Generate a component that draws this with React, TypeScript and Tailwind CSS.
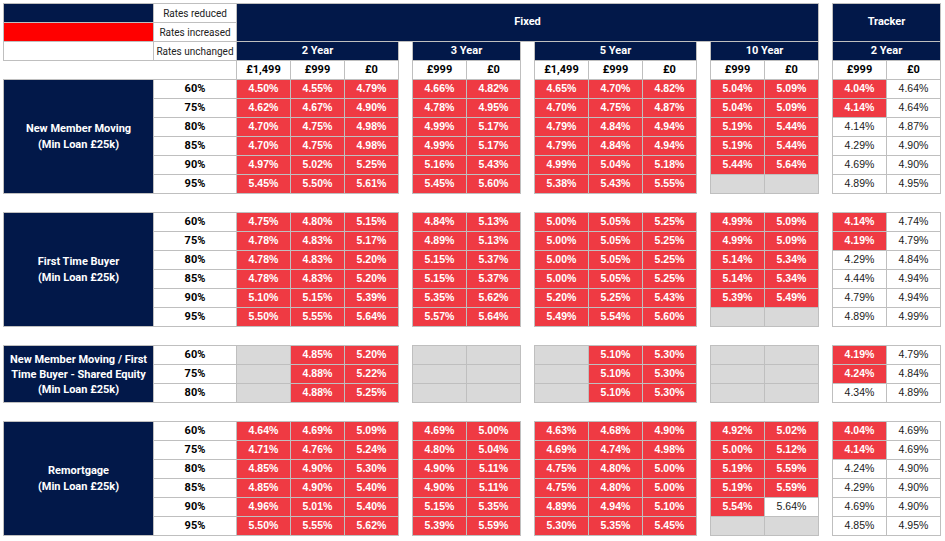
import React from "react";

const B = "-ml-px -mt-px border border-[#bfbfbf] flex items-center justify-center";
const NAVY = "bg-[#021849]";
const HEAD = "font-['Roboto',Arial,sans-serif] font-bold text-[11px]";

type Row = [string, string[], string[], string[], string[], string[]];

const sections: { label: React.ReactNode; span: string; rows: Row[] }[] = [
  {
    label: (
      <>
        New Member Moving
        <br />
        (Min Loan £25k)
      </>
    ),
    span: "row-span-6 leading-4",
    rows: [
      ["60%", ["4.50", "4.55", "4.79"], ["4.66", "4.82"], ["4.65", "4.70", "4.82"], ["5.04", "5.09"], ["4.04", "w4.64"]],
      ["75%", ["4.62", "4.67", "4.90"], ["4.78", "4.95"], ["4.70", "4.75", "4.87"], ["5.04", "5.09"], ["4.14", "w4.64"]],
      ["80%", ["4.70", "4.75", "4.98"], ["4.99", "5.17"], ["4.79", "4.84", "4.94"], ["5.19", "5.44"], ["w4.14", "w4.87"]],
      ["85%", ["4.70", "4.75", "4.98"], ["4.99", "5.17"], ["4.79", "4.84", "4.94"], ["5.19", "5.44"], ["w4.29", "w4.90"]],
      ["90%", ["4.97", "5.02", "5.25"], ["5.16", "5.43"], ["4.99", "5.04", "5.18"], ["5.44", "5.64"], ["w4.69", "w4.90"]],
      ["95%", ["5.45", "5.50", "5.61"], ["5.45", "5.60"], ["5.38", "5.43", "5.55"], ["-", "-"], ["w4.89", "w4.95"]],
    ],
  },
  {
    label: (
      <>
        First Time Buyer
        <br />
        (Min Loan £25k)
      </>
    ),
    span: "row-span-6 leading-4",
    rows: [
      ["60%", ["4.75", "4.80", "5.15"], ["4.84", "5.13"], ["5.00", "5.05", "5.25"], ["4.99", "5.09"], ["4.14", "w4.74"]],
      ["75%", ["4.78", "4.83", "5.17"], ["4.89", "5.13"], ["5.00", "5.05", "5.25"], ["4.99", "5.09"], ["4.19", "w4.79"]],
      ["80%", ["4.78", "4.83", "5.20"], ["5.15", "5.37"], ["5.00", "5.05", "5.25"], ["5.14", "5.34"], ["w4.29", "w4.84"]],
      ["85%", ["4.78", "4.83", "5.20"], ["5.15", "5.37"], ["5.00", "5.05", "5.25"], ["5.14", "5.34"], ["w4.44", "w4.94"]],
      ["90%", ["5.10", "5.15", "5.39"], ["5.35", "5.62"], ["5.20", "5.25", "5.43"], ["5.39", "5.49"], ["w4.79", "w4.94"]],
      ["95%", ["5.50", "5.55", "5.64"], ["5.57", "5.64"], ["5.49", "5.54", "5.60"], ["-", "-"], ["w4.89", "w4.99"]],
    ],
  },
  {
    label: (
      <>
        New Member Moving / First
        <br />
        Time Buyer - Shared Equity
        <br />
        (Min Loan £25k)
      </>
    ),
    span: "row-span-3 leading-[15px]",
    rows: [
      ["60%", ["-", "4.85", "5.20"], ["-", "-"], ["-", "5.10", "5.30"], ["-", "-"], ["4.19", "w4.79"]],
      ["75%", ["-", "4.88", "5.22"], ["-", "-"], ["-", "5.10", "5.30"], ["-", "-"], ["4.24", "w4.84"]],
      ["80%", ["-", "4.88", "5.25"], ["-", "-"], ["-", "5.10", "5.30"], ["-", "-"], ["w4.34", "w4.89"]],
    ],
  },
  {
    label: (
      <>
        Remortgage
        <br />
        (Min Loan £25k)
      </>
    ),
    span: "row-span-6 leading-4",
    rows: [
      ["60%", ["4.64", "4.69", "5.09"], ["4.69", "5.00"], ["4.63", "4.68", "4.90"], ["4.92", "5.02"], ["4.04", "w4.69"]],
      ["75%", ["4.71", "4.76", "5.24"], ["4.80", "5.04"], ["4.69", "4.74", "4.98"], ["5.00", "5.12"], ["4.14", "w4.69"]],
      ["80%", ["4.85", "4.90", "5.30"], ["4.90", "5.11"], ["4.75", "4.80", "5.00"], ["5.19", "5.59"], ["w4.24", "w4.90"]],
      ["85%", ["4.85", "4.90", "5.40"], ["4.90", "5.11"], ["4.75", "4.80", "5.00"], ["5.19", "5.59"], ["w4.29", "w4.90"]],
      ["90%", ["4.96", "5.01", "5.40"], ["5.15", "5.35"], ["4.89", "4.94", "5.10"], ["5.54", "w5.64"], ["w4.69", "w4.90"]],
      ["95%", ["5.50", "5.55", "5.62"], ["5.39", "5.59"], ["5.30", "5.35", "5.45"], ["-", "-"], ["w4.85", "w4.95"]],
    ],
  },
];

function Cell({ v }: { v: string }) {
  if (v === "-") return <div className={`${B} bg-[#d9d9d9]`} />;
  if (v.startsWith("w"))
    return <div className={`${B} bg-white text-[#1a1a1a] text-[10.5px] font-normal`}>{v.slice(1)}%</div>;
  return <div className={`${B} bg-[#ef3a43] text-white text-[10.5px] font-bold`}>{v}%</div>;
}

function Gap() {
  return <div />;
}

function Hdr({ children, cls = "" }: { children?: React.ReactNode; cls?: string }) {
  return <div className={`${B} ${HEAD} ${cls}`}>{children}</div>;
}

export default function App() {
  return (
    <div className="w-[945px] h-[541px] bg-white overflow-hidden pl-[4px] pt-[4px] font-['Liberation_Sans',Arial,sans-serif]">
      <div className="grid grid-cols-[150px_83px_54px_54px_54px_14px_54px_54px_14px_54px_54px_54px_14px_54px_54px_14px_54px_54px] auto-rows-[19px]">
        {/* Row 1 */}
        <div className={`${B} ${NAVY}`} />
        <div className={`${B} bg-white text-[10px] text-[#222] font-['Roboto',Arial,sans-serif]`}>Rates reduced</div>
        <Hdr cls={`col-[span_13/span_13] row-span-2 ${NAVY} text-white`}>Fixed</Hdr>
        <div className="row-span-2" />
        <Hdr cls={`col-span-2 row-span-2 ${NAVY} text-white`}>Tracker</Hdr>
        {/* Row 2 */}
        <div className={`${B} bg-[#ff0000]`} />
        <div className={`${B} bg-white text-[10px] text-[#222] font-['Roboto',Arial,sans-serif]`}>Rates increased</div>
        {/* Row 3 */}
        <div className={`${B} bg-white`} />
        <div className={`${B} bg-white text-[10px] text-[#222] font-['Roboto',Arial,sans-serif]`}>Rates unchanged</div>
        <Hdr cls={`col-span-3 ${NAVY} text-white`}>2 Year</Hdr>
        <Gap />
        <Hdr cls={`col-span-2 ${NAVY} text-white`}>3 Year</Hdr>
        <Gap />
        <Hdr cls={`col-span-3 ${NAVY} text-white`}>5 Year</Hdr>
        <Gap />
        <Hdr cls={`col-span-2 ${NAVY} text-white`}>10 Year</Hdr>
        <Gap />
        <Hdr cls={`col-span-2 ${NAVY} text-white`}>2 Year</Hdr>
        {/* Row 4 */}
        <div className="col-span-2" />
        <Hdr cls="bg-white text-black">£1,499</Hdr>
        <Hdr cls="bg-white text-black">£999</Hdr>
        <Hdr cls="bg-white text-black">£0</Hdr>
        <Gap />
        <Hdr cls="bg-white text-black">£999</Hdr>
        <Hdr cls="bg-white text-black">£0</Hdr>
        <Gap />
        <Hdr cls="bg-white text-black">£1,499</Hdr>
        <Hdr cls="bg-white text-black">£999</Hdr>
        <Hdr cls="bg-white text-black">£0</Hdr>
        <Gap />
        <Hdr cls="bg-white text-black">£999</Hdr>
        <Hdr cls="bg-white text-black">£0</Hdr>
        <Gap />
        <Hdr cls="bg-white text-black">£999</Hdr>
        <Hdr cls="bg-white text-black">£0</Hdr>

        {sections.map((s, si) => (
          <React.Fragment key={si}>
            {si > 0 && <div className="col-span-full" />}
            <div className={`${B} ${NAVY} ${s.span} text-center text-white font-['Roboto',Arial,sans-serif] font-bold text-[11px]`}>
              <div>{s.label}</div>
            </div>
            {s.rows.map((r, ri) => (
              <React.Fragment key={ri}>
                <Hdr cls="bg-white text-black">{r[0]}</Hdr>
                {r[1].map((v, i) => (
                  <Cell key={"a" + i} v={v} />
                ))}
                <Gap />
                {r[2].map((v, i) => (
                  <Cell key={"b" + i} v={v} />
                ))}
                <Gap />
                {r[3].map((v, i) => (
                  <Cell key={"c" + i} v={v} />
                ))}
                <Gap />
                {r[4].map((v, i) => (
                  <Cell key={"d" + i} v={v} />
                ))}
                <Gap />
                {r[5].map((v, i) => (
                  <Cell key={"e" + i} v={v} />
                ))}
              </React.Fragment>
            ))}
          </React.Fragment>
        ))}
      </div>
    </div>
  );
}
